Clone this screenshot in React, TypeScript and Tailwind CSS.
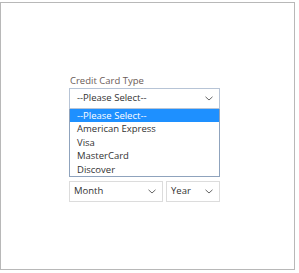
const CARD_TYPES = ["--Please Select--", "American Express", "Visa", "MasterCard", "Discover"];

function Chevron() {
  return (
    <svg width="8" height="5" viewBox="0 0 8 5" fill="none" className="shrink-0">
      <polyline points="0.5,0.8 4,4 7.5,0.8" stroke="#666" strokeWidth="1" />
    </svg>
  );
}

export default function App() {
  return (
    <div className="bg-white w-[299px] h-[273px] pt-[2px] font-['Open_Sans',sans-serif]">
      <div className="w-[295px] h-[268px] border border-[#b8b8b8] pt-[71px] pl-[68px]">
        <div className="w-[151px]">
          {/* Label */}
          <p className="text-[9.5px] leading-[13px] text-[#6b5b57] ml-[1px]">Credit Card Type</p>

          {/* Open select */}
          <div className="h-[21px] mt-[1px] flex items-center justify-between border border-[#b7c4d6] bg-white pl-[7px] pr-[6px] text-[9.5px] text-[#333]">
            <span>--Please Select--</span>
            <Chevron />
          </div>
          <ul className="border border-[#8fa3bd] border-t-0 text-[9.5px] text-[#333]">
            {CARD_TYPES.map((type, i) => (
              <li
                key={type}
                className={
                  "h-[13.4px] leading-[13.4px] pl-[7px] " +
                  (i === 0 ? "bg-[#1e90ff] text-white" : "")
                }
              >
                {type}
              </li>
            ))}
          </ul>

          {/* Expiry */}
          <div className="flex gap-[3px] mt-[4px]">
            <div className="w-[94px] h-[21px] flex items-center justify-between border border-[#dcdcdc] pl-[4px] pr-[6px] text-[9.5px] text-[#333]">
              <span>Month</span>
              <Chevron />
            </div>
            <div className="w-[54px] h-[21px] flex items-center justify-between border border-[#dcdcdc] pl-[4px] pr-[6px] text-[9.5px] text-[#333]">
              <span>Year</span>
              <Chevron />
            </div>
          </div>
        </div>
      </div>
    </div>
  );
}
